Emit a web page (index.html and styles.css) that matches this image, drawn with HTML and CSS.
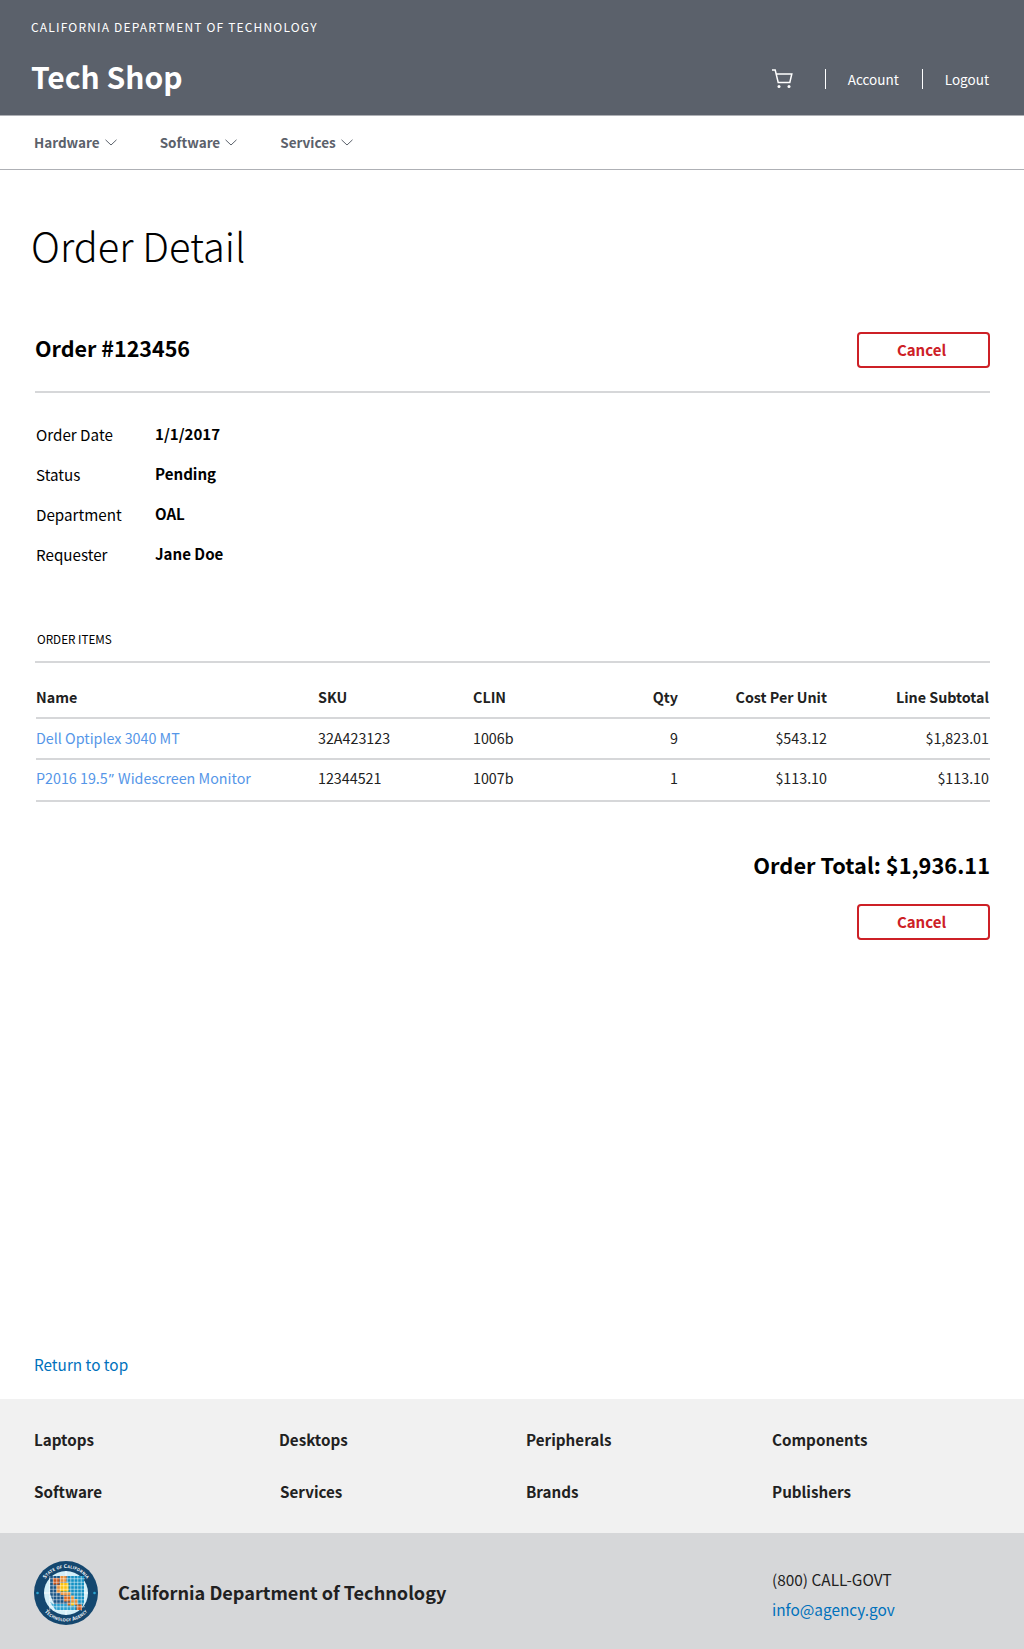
FILE: index.html
```html
<!DOCTYPE html>
<html lang="en">
<head>
<meta charset="utf-8">
<title>Order Detail - Tech Shop</title>
<link rel="stylesheet" href="styles.css">
</head>
<body>
<header class="site-header">
  <div class="agency">CALIFORNIA DEPARTMENT OF TECHNOLOGY</div>
  <div class="brand-row">
    <a class="brand" href="#">Tech Shop</a>
    <div class="user-nav">
      <a class="cart" href="#" aria-label="Cart">
        <svg width="22" height="20" viewBox="0 0 22 20" fill="none" stroke="#fff" stroke-width="1.5"><path d="M1 1h3.200l3 12.400h11.600l2-8.400H5"/><circle cx="8" cy="17.600" r="1.500" fill="#fff" stroke="none"/><circle cx="18" cy="17.600" r="1.500" fill="#fff" stroke="none"/></svg>
      </a>
      <a class="user-link" href="#">Account</a>
      <a class="user-link" href="#">Logout</a>
    </div>
  </div>
</header>
<nav class="main-nav">
  <a class="nav-item" href="#">Hardware <svg class="chev" width="12" height="7" viewBox="0 0 12 7"><path d="M.5.8 6 6l5.500-5.200"/></svg></a>
  <a class="nav-item" href="#">Software <svg class="chev" width="12" height="7" viewBox="0 0 12 7"><path d="M.5.8 6 6l5.500-5.200"/></svg></a>
  <a class="nav-item" href="#">Services <svg class="chev" width="12" height="7" viewBox="0 0 12 7"><path d="M.5.8 6 6l5.500-5.200"/></svg></a>
</nav>
<main class="content">
  <h1 class="page-title">Order Detail</h1>
  <section class="order-head">
    <h2 class="order-no">Order #123456</h2>
    <button class="btn-cancel">Cancel</button>
  </section>
  <dl class="meta">
    <div class="meta-row"><dt>Order Date</dt><dd>1/1/2017</dd></div>
    <div class="meta-row"><dt>Status</dt><dd>Pending</dd></div>
    <div class="meta-row"><dt>Department</dt><dd>OAL</dd></div>
    <div class="meta-row"><dt>Requester</dt><dd>Jane Doe</dd></div>
  </dl>
  <h3 class="items-title">ORDER ITEMS</h3>
  <table class="items">
    <thead>
      <tr><th class="c-name">Name</th><th class="c-sku">SKU</th><th class="c-clin">CLIN</th><th class="num c-qty">Qty</th><th class="num c-cost">Cost Per Unit</th><th class="num c-line">Line Subtotal</th></tr>
    </thead>
    <tbody>
      <tr><td><a href="#">Dell Optiplex 3040 MT</a></td><td>32A423123</td><td>1006b</td><td class="num">9</td><td class="num">$543.12</td><td class="num">$1,823.01</td></tr>
      <tr class="last"><td><a href="#">P2016 19.5<span class="quote">”</span> Widescreen Monitor</a></td><td>12344521</td><td>1007b</td><td class="num">1</td><td class="num">$113.10</td><td class="num">$113.10</td></tr>
    </tbody>
  </table>
  <div class="summary">
    <div class="total">Order Total: $1,936.11</div>
    <button class="btn-cancel">Cancel</button>
  </div>
</main>
<div class="to-top"><a href="#">Return to top</a></div>
<section class="link-footer">
  <a href="#">Laptops</a><a href="#">Desktops</a><a href="#">Peripherals</a><a href="#">Components</a>
  <a href="#">Software</a><a href="#" class="shift">Services</a><a href="#">Brands</a><a href="#">Publishers</a>
</section>
<footer class="site-footer">
  <div class="org">
    <svg class="seal" width="66" height="66" viewBox="0 0 66 66">
      <circle cx="33" cy="33" r="32" fill="#14476f"/>
      <circle cx="33" cy="33" r="22" fill="#d4eff8"/>
      <path d="M33 11v44M11 33h44" fill="none" stroke="#fff" stroke-width=".8"/>
      <path d="M17 16h34v26l-3 8H23l-2-6-4-10z" fill="#1b5585"/>
      <path d="M35 16h16v26l-3 8H42L30 30z" fill="#1591c4"/>
      <path d="M17 42l4 6 2 2h19l-3-6H21z" fill="#2aa0cf"/>
      <g fill="#e8903a">
        <rect x="20" y="18" width="6.500" height="6.500" fill="#c8561c"/>
        <rect x="27" y="16" width="6.500" height="6.500"/>
        <rect x="23.500" y="25" width="3.500" height="8"/>
        <rect x="27" y="23" width="8.500" height="8.500" fill="#fcc30b"/>
        <rect x="27.500" y="32" width="10" height="3"/>
        <rect x="31" y="35.500" width="6" height="6" fill="#d9691f"/>
        <rect x="38" y="35.500" width="3" height="7"/>
        <rect x="41.500" y="39" width="3" height="6"/>
        <rect x="38" y="42.500" width="3" height="3" fill="#fcc30b"/>
        <rect x="34.500" y="42.500" width="3" height="3" fill="#d9691f"/>
        <rect x="43.500" y="44.500" width="5.500" height="5.500" fill="#c8561c"/>
      </g>
      <path class="seal-grid" d="M16.750 16v35M20.250 16v35M23.750 16v35M27.250 16v35M30.750 16v35M34.250 16v35M37.750 16v35M41.250 16v35M44.750 16v35M48.250 16v35M16 18.750h36M16 22.250h36M16 25.750h36M16 29.250h36M16 32.750h36M16 36.250h36M16 39.750h36M16 43.250h36M16 46.750h36"/>
      <circle cx="4.500" cy="33" r="1.300" fill="#2aa3d0"/>
      <circle cx="61.500" cy="33" r="1.300" fill="#2aa3d0"/>
      <path id="sealtop" d="M8 33a25 25 0 0 1 50 0" fill="none"/>
      <path id="sealbot" d="M4.500 33a28.500 28.500 0 0 0 57 0" fill="none"/>
      <text class="seal-text"><textPath href="#sealtop" startOffset="50%" text-anchor="middle">State of California</textPath></text>
      <text class="seal-text"><textPath href="#sealbot" startOffset="50%" text-anchor="middle">Technology Agency</textPath></text>
    </svg>
    <span class="org-name">California Department of Technology</span>
  </div>
  <div class="contact">
    <div class="phone">(800) CALL-GOVT</div>
    <a class="mail" href="#">info@agency.gov</a>
  </div>
</footer>
</body>
</html>
```
FILE: styles.css
```css
* { box-sizing: border-box; }
html, body { margin: 0; padding: 0; }
body {
  font-family: "Noto Sans CJK SC", "Noto Sans", sans-serif;
  color: #000;
  background: #fff;
  font-size: 15px;
  width: 1024px;
  height: 1649px;
  overflow: hidden;
}
a { text-decoration: none; color: inherit; }
.site-header {
  height: 116px;
  background: #5b616b;
  border-bottom: 1px solid #aeb0b5;
  color: #fff;
  padding: 17px 35px 0 31px;
}
.agency { font-size: 12px; line-height: 20px; letter-spacing: 1.170px; font-weight: 400; }
.brand-row { display: flex; justify-content: space-between; align-items: center; height: 60px; margin-top: 12px; }
.brand { font-size: 30px; font-weight: 700; line-height: 40px; position: relative; top: -3px; }
.user-nav { display: flex; align-items: center; }
.cart { display: block; height: 20px; margin-right: 32px; }
.user-link {
  font-size: 13.500px; line-height: 20px; padding-left: 22px;
  border-left: 1px solid #fff; margin-right: 23px;
}
.user-link:last-child { margin-right: 0; }
.main-nav {
  height: 54px;
  border-bottom: 1px solid #aeb0b5;
  display: flex;
  align-items: center;
  gap: 43px;
  padding: 0 0 2px 34px;
  color: #5b616b;
  font-weight: 700;
  font-size: 13.500px;
}
.nav-item { display: flex; align-items: center; gap: 5px; }
.chev { fill: none; stroke: #5b616b; stroke-width: 1; margin-top: 1px; }
.content { padding: 0 34px 0 35px; }
.page-title { margin: 0 0 0 -4px; padding-top: 47px; font-size: 39.800px; line-height: 56px; font-weight: 200; }
.order-head {
  display: flex; justify-content: space-between; align-items: center;
  margin-top: 58px;
  height: 62px; padding-bottom: 24px; padding-top: 1px;
  border-bottom: 2px solid #d6d7d9;
}
.order-no { margin: 0; padding-bottom: 3px; font-size: 21.500px; line-height: 30px; font-weight: 700; }
.btn-cancel {
  width: 133px; height: 36px;
  background: #fff;
  border: 2px solid #cd2026;
  border-radius: 4px;
  color: #cd2026;
  font: 700 15px/20px "Noto Sans CJK SC", sans-serif;
  padding: 0 4px 0 0;
}
.meta { margin: 21px 0 0 1px; }
.meta-row { display: flex; height: 40px; align-items: center; }
.meta dt { width: 119px; font-size: 15.200px; }
.meta dd { margin: 0; font-weight: 700; font-size: 15.100px; position: relative; top: -1px; }
.items-title {
  margin: 55px 0 0; padding: 0 0 12px 2px;
  font-size: 11.700px; line-height: 20px; font-weight: 400;
  border-bottom: 2px solid #d6d7d9;
}
.items {
  width: calc(100% - 1px); margin-left: 1px; border-collapse: collapse;
  font-size: 14.300px; color: #212121;
}
.items th { font-weight: 700; height: 55px; padding: 12px 1px 0 0; text-align: left; border-bottom: 2px solid #d6d7d9; font-size: 14.300px; }
.items td { height: 41px; padding: 0 1px 3px 0; border-bottom: 2px solid #d6d7d9; }
.items .last td { height: 42px; padding-bottom: 6px; }
.items a { color: #5596e8; }
.quote { font-family: "Noto Sans", sans-serif; margin: 0 1px; }
.items .num { text-align: right; }
.c-name { width: 282px; }
.c-sku { width: 155px; }
.c-clin { width: 100px; }
.c-qty { width: 106px; }
.c-cost { width: 149px; }
.summary { display: flex; flex-direction: column; align-items: flex-end; }
.total { font-size: 21.800px; font-weight: 700; line-height: 30px; margin-top: 48px; }
.summary .btn-cancel { margin-top: 24px; }
.to-top { position: absolute; left: 34px; top: 1352px; font-size: 15.300px; line-height: 24px; color: #0071bc; }
.link-footer {
  position: absolute; left: 0; top: 1399px; width: 1024px; height: 134px;
  background: #f1f1f1;
  display: grid;
  grid-template-columns: 245px 247px 246px 1fr;
  grid-auto-rows: 52px;
  padding: 14px 0 0 34px;
  font-weight: 700;
  font-size: 15.200px;
  color: #212121;
}
.link-footer a { line-height: 52px; }
.shift { margin-left: 1px; }
.site-footer {
  position: absolute; left: 0; top: 1533px; width: 1024px; height: 116px;
  background: #d6d7d9;
  display: flex;
  justify-content: space-between;
  padding: 27px 0 0 33px;
  color: #212121;
}
.org { display: flex; align-items: center; height: 64px; gap: 19px; }
.seal { margin-top: 2px; }
.seal-grid { fill: none; stroke: #fff; stroke-width: .5; }
.seal-text { font-size: 5px; font-weight: 700; fill: #fff; font-variant: small-caps; letter-spacing: .2px; }
.org-name { font-size: 18.100px; font-weight: 700; }
.contact { width: 252px; font-size: 15.400px; line-height: 30px; margin-top: 4px; }
.mail { color: #0071bc; }
```
